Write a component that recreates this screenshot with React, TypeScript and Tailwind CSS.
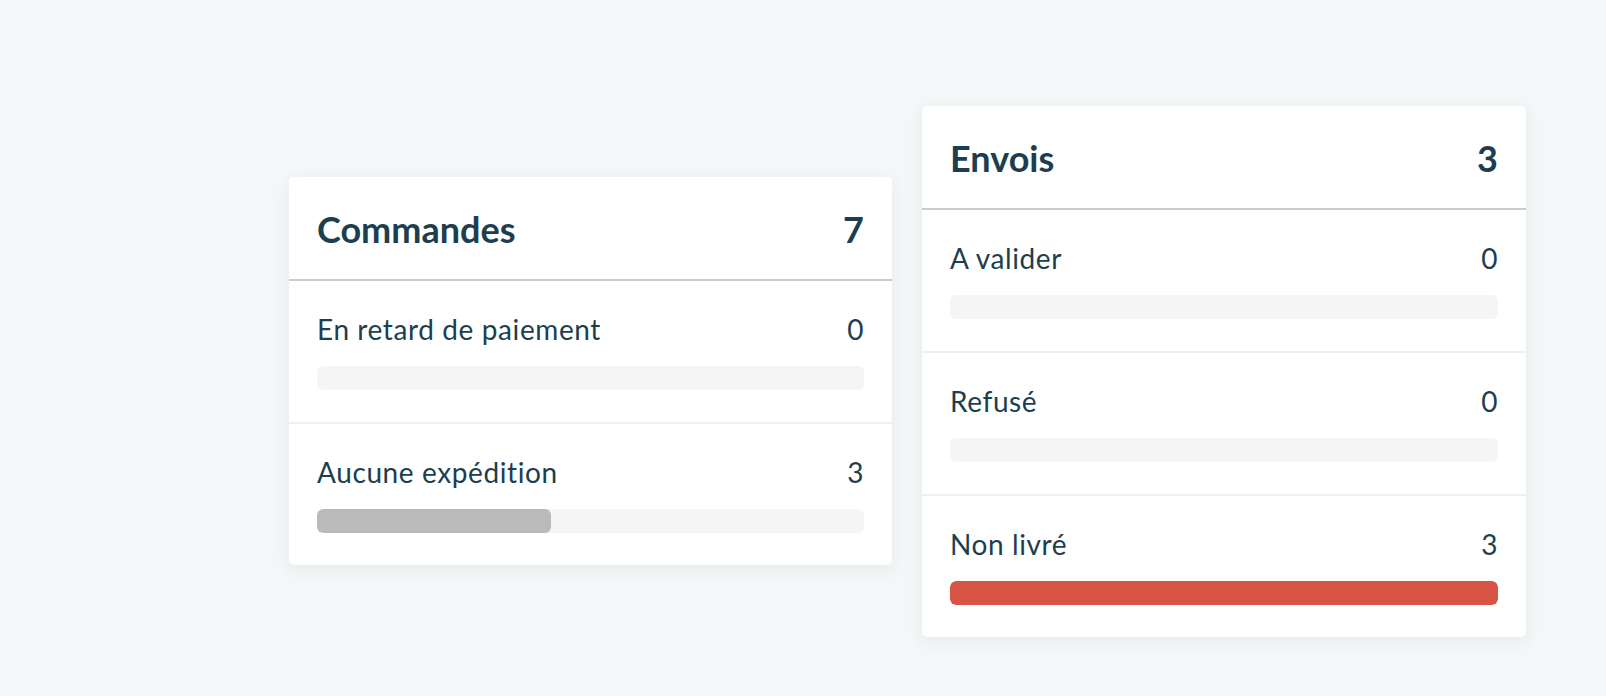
const FONT = { fontFamily: "Lato, 'Open Sans', sans-serif" };

type Row = {
  label: string;
  count: number;
  fill: string;
};

type Card = {
  title: string;
  total: number;
  width: string;
  rows: Row[];
};

const CARDS: Card[] = [
  {
    title: "Commandes",
    total: 7,
    width: "w-[603px]",
    rows: [
      { label: "En retard de paiement", count: 0, fill: "bg-[#bababa]" },
      { label: "Aucune expédition", count: 3, fill: "bg-[#bababa]" },
    ],
  },
  {
    title: "Envois",
    total: 3,
    width: "w-[604px]",
    rows: [
      { label: "A valider", count: 0, fill: "bg-[#d85444]" },
      { label: "Refusé", count: 0, fill: "bg-[#d85444]" },
      { label: "Non livré", count: 3, fill: "bg-[#d85444]" },
    ],
  },
];

const StatCard = ({ card }: { card: Card }) => {
  return (
    <div
      className={`${card.width} shrink-0 rounded-[5px] bg-white text-[#1d3e4e] shadow-[0_4px_16px_rgba(30,50,60,0.07)]`}
    >
      <div className="flex items-center justify-between border-b-2 border-[#cccccc] px-7 pt-[31px] pb-[28px]">
        <span className="text-[36px] leading-[43px] font-bold">
          {card.title}
        </span>
        <span className="text-[36px] leading-[43px] font-bold">
          {card.total}
        </span>
      </div>
      {card.rows.map((row, index) => {
        const percent = card.total > 0 ? (row.count / card.total) * 100 : 0;
        return (
          <div
            key={index}
            className={`px-7 pt-[31px] pb-[32px] ${
              index !== card.rows.length - 1
                ? "border-b-2 border-[#efefef]"
                : ""
            }`}
          >
            <div className="flex items-center justify-between text-[28px] leading-[34px] tracking-[0.6px]">
              <span>{row.label}</span>
              <span>{row.count}</span>
            </div>
            <div className="mt-5 h-6 w-full overflow-hidden rounded-[6px] bg-[#f5f5f5]">
              <div
                className={`h-full rounded-[6px] ${row.fill}`}
                style={{ width: `${percent}%` }}
              />
            </div>
          </div>
        );
      })}
    </div>
  );
};

export default function App() {
  return (
    <div
      className="flex h-[696px] w-full items-center gap-[30px] bg-[#f4f7f8] pt-[46px] pl-[289px]"
      style={FONT}
    >
      {CARDS.map((card, index) => (
        <StatCard key={index} card={card} />
      ))}
    </div>
  );
}
